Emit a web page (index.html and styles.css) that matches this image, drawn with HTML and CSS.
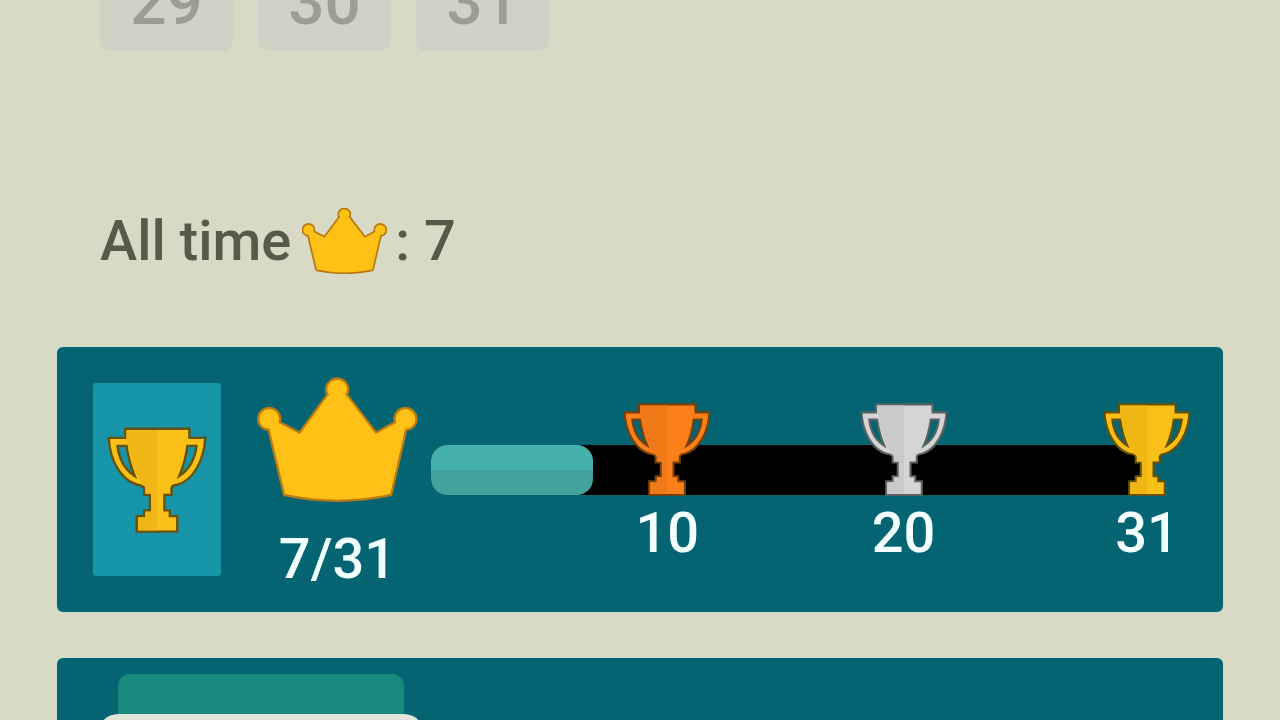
FILE: index.html
```html
<!DOCTYPE html>
<html lang="en">
<head>
<meta charset="utf-8">
<meta name="viewport" content="width=device-width, initial-scale=1">
<title>Crowns</title>
<link rel="stylesheet" href="styles.css">
</head>
<body>
<svg class="sprite" aria-hidden="true">
  <symbol id="crown" viewBox="50 36 488 380">
    <g class="crown-line">
      <circle cx="87" cy="162" r="30"/><circle cx="293" cy="73" r="30"/><circle cx="500" cy="162" r="30"/>
      <path d="M85 180L135 390Q293 424 454 390L502 180L472 174L410 208L322 93L300 80H286L264 93L180 208L115 174Z"/>
    </g>
    <g class="crown-fill">
      <circle cx="87" cy="162" r="30"/><circle cx="293" cy="73" r="30"/><circle cx="500" cy="162" r="30"/>
      <path d="M85 180L135 390Q293 424 454 390L502 180L472 174L410 208L322 93L300 80H286L264 93L180 208L115 174Z"/>
    </g>
  </symbol>
  <symbol id="trophy" viewBox="174 258 300 320">
    <path class="cup" fill-rule="evenodd" d="M230 266H420V293H467C464 360 430 420 384 432Q368 434 367 442V462H346V508H362V525H384V571H264V525H286V508H303V462H286V442Q282 434 266 432C218 420 184 360 181 293H230ZM207 317C210 350 226 386 258 406C246 378 238 350 234 317ZM441 317H414C410 350 402 378 390 406C422 386 438 350 441 317Z"/>
    <path class="shade" d="M234 270H324V567H268V529H290V512H307V458H290V440C262 410 240 350 234 293Z"/>
  </symbol>
</svg>
<main class="page">
  <div class="days">
    <span class="day">29</span>
    <span class="day">30</span>
    <span class="day">31</span>
  </div>
  <p class="total">
    <span>All time</span>
    <svg class="crown crown-small" role="img" aria-label="crowns"><use href="#crown"/></svg>
    <span>: 7</span>
  </p>
  <section class="card goal">
    <div class="tile"><svg class="trophy trophy-large gold"><use href="#trophy"/></svg></div>
    <div class="score">
      <svg class="crown crown-large"><use href="#crown"/></svg>
      <span>7/31</span>
    </div>
    <div class="rail">
      <div class="track"><div class="fill" style="width:22.6%"></div></div>
      <div class="milestone" style="left:33%"><svg class="trophy bronze"><use href="#trophy"/></svg><span>10</span></div>
      <div class="milestone" style="left:66%"><svg class="trophy silver"><use href="#trophy"/></svg><span>20</span></div>
      <div class="milestone" style="left:100%"><svg class="trophy gold"><use href="#trophy"/></svg><span>31</span></div>
    </div>
  </section>
  <section class="card next">
    <div class="stack">
      <div class="tab"></div>
      <div class="sheet"></div>
    </div>
  </section>
</main>
</body>
</html>
```
FILE: styles.css
```css
* {
  box-sizing: border-box;
}

body {
  margin: 0;
  height: 100vh;
  overflow: hidden;
  background: #d9dac5;
  color: #58594a;
  font: 500 56px/56px Roboto, "Liberation Sans", sans-serif;
}

svg {
  display: block;
  flex: none;
}

.sprite {
  position: absolute;
  width: 0;
  height: 0;
}

.page {
  height: 100%;
  padding: 0 57px;
  overflow: hidden;
}

.days {
  display: flex;
  gap: 25px;
  padding-left: 43px;
  height: 51px;
  align-items: flex-end;
  overflow: hidden;
}

.day {
  flex: none;
  width: 133px;
  padding: 52px 0 16px;
  border-radius: 10px;
  background: #d1d2c6;
  color: #9c9e91;
  font-size: 64px;
  line-height: 64px;
  text-align: center;
}

.total {
  display: flex;
  align-items: center;
  margin: 157px 0 73px;
  padding-left: 43px;
}

.crown-small {
  width: 85px;
  height: 66px;
  margin: 0 8px 0 11px;
  --line: 20px;
}

.crown-large {
  width: 161px;
  height: 126px;
  --line: 14px;
}

.crown-line {
  fill: none;
  stroke: #b97912;
  stroke-width: var(--line);
  stroke-linejoin: round;
}

.crown-fill {
  fill: #ffc116;
}

.card {
  border-radius: 6px;
  background: #046472;
  box-shadow: 0 0 0 1px #c5ddcf;
  color: #f4ffff;
}

.goal {
  display: flex;
  align-items: flex-start;
  padding: 30px 36px 25px;
}

.tile {
  display: flex;
  align-items: center;
  justify-content: center;
  flex: none;
  width: 128px;
  height: 193px;
  margin: 6px 36px 0 0;
  border-radius: 3px;
  background: #1695a9;
}

.score {
  display: flex;
  flex: none;
  flex-direction: column;
  align-items: center;
  gap: 28px;
}

.rail {
  position: relative;
  flex: 1;
  margin: 0 40px 0 13px;
  padding-top: 68px;
}

.track {
  height: 50px;
  border-radius: 16px;
  background: #000;
}

.fill {
  height: 100%;
  border-radius: 16px;
  background: linear-gradient(#45b1aa 50%, #41a39b 50%);
}

.milestone {
  position: absolute;
  top: 25px;
  display: flex;
  flex-direction: column;
  align-items: center;
  gap: 8px;
  transform: translateX(-50%);
}

.trophy {
  width: 90px;
  height: 95px;
}

.trophy-large {
  width: 102px;
  height: 108px;
}

.cup {
  fill: var(--metal);
  stroke: var(--edge);
  stroke-width: 7px;
}

.shade {
  fill: var(--dark);
}

.gold {
  --metal: #fbc018;
  --dark: #efb616;
  --edge: #66520c;
}

.bronze {
  --metal: #fb8019;
  --dark: #f07a18;
  --edge: #76410c;
}

.silver {
  --metal: #d5d5d6;
  --dark: #cacacb;
  --edge: #5c6262;
}

.next {
  margin-top: 46px;
  padding: 16px 41px 36px;
}

.stack {
  width: 326px;
}

.tab {
  height: 40px;
  margin: 0 20px;
  border-radius: 12px 12px 0 0;
  background: #188a7d;
}

.sheet {
  height: 160px;
  border-radius: 20px;
  background: #e4e5da;
}
```
